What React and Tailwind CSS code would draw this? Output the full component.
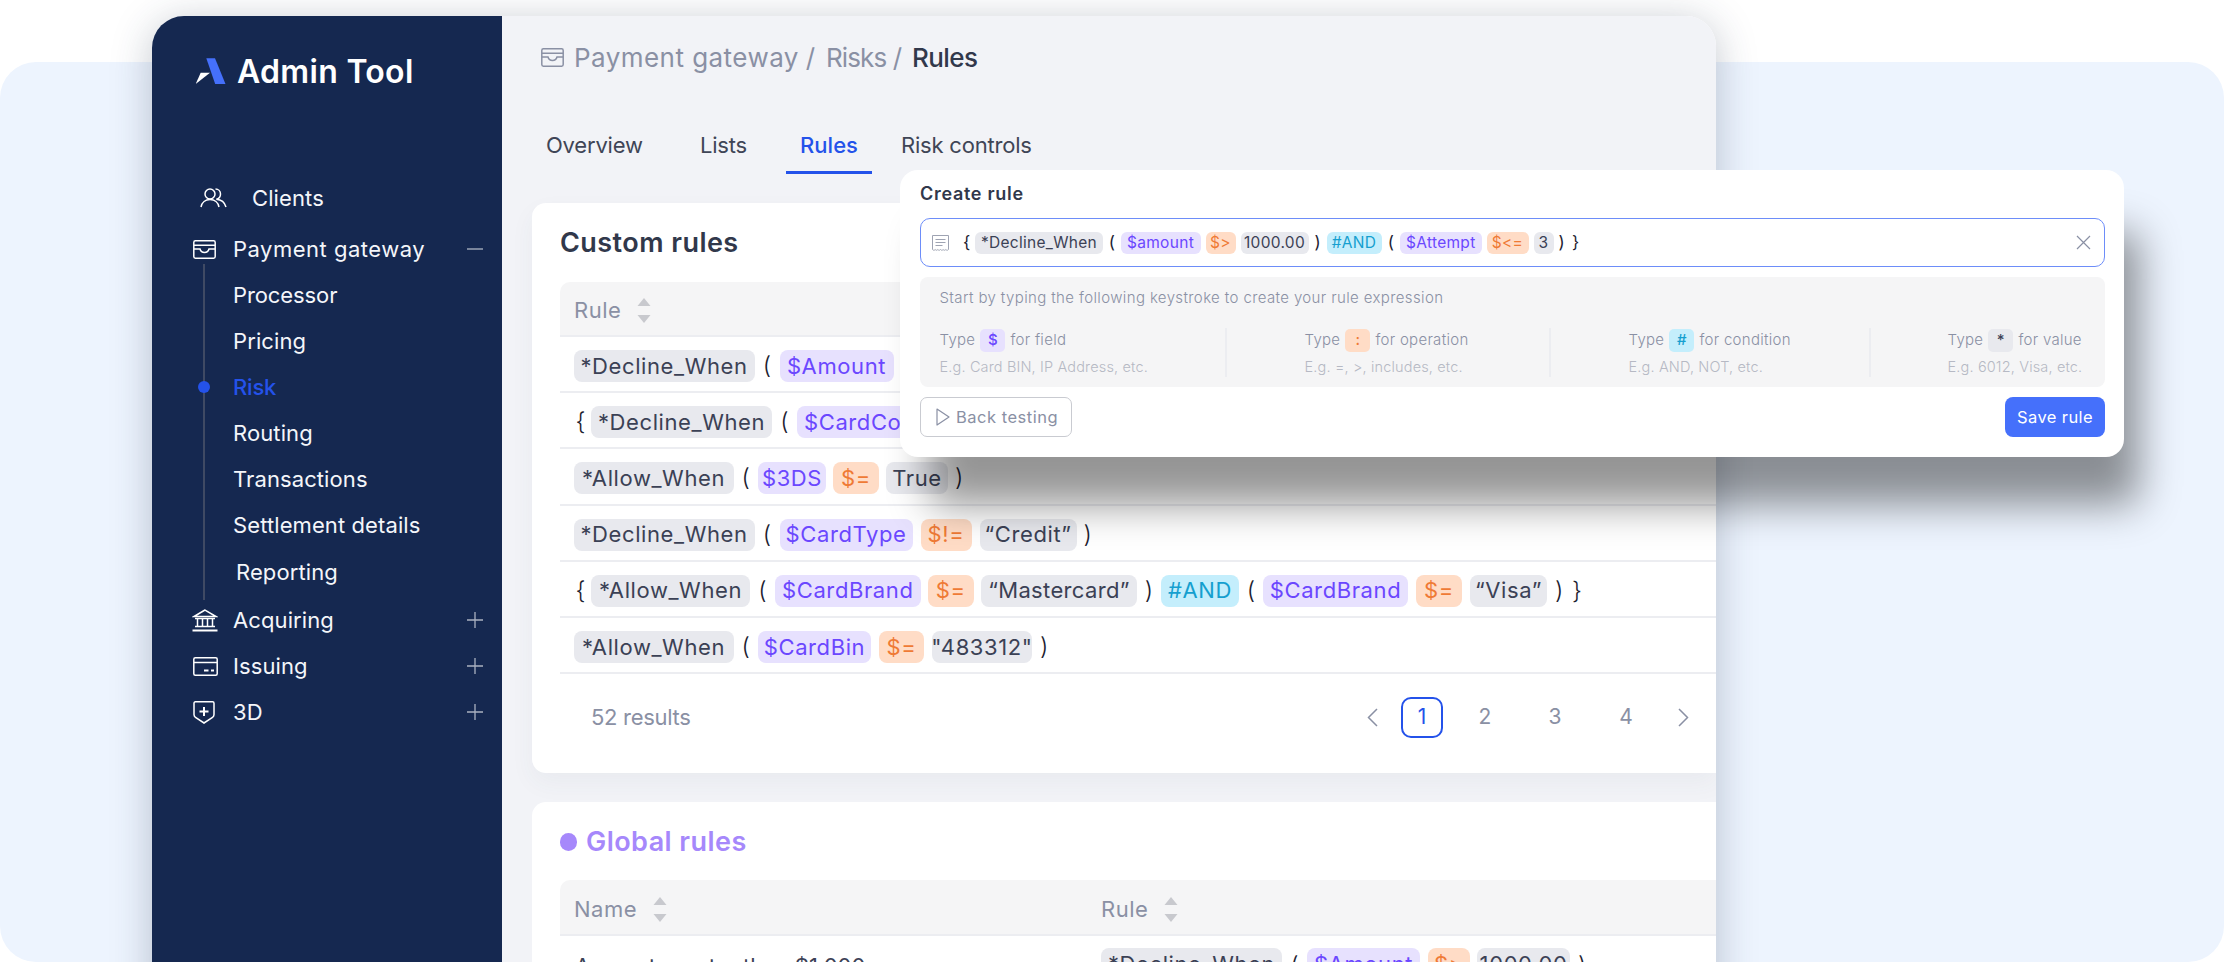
import React from "react";

function WalletIcon({ className }) {
  return (
    <svg viewBox="0 0 23 19" fill="none" stroke="currentColor" strokeWidth="1.5" className={className}>
      <rect x="0.8" y="0.8" width="21.4" height="17.4" rx="1.6" />
      <path d="M1 5.2h21" />
      <path d="M1 9h6c.6 2.2 2.4 3.4 4.5 3.4S15.400 11.200 16 9h6" />
    </svg>
  );
}

function Minus() {
  return <svg viewBox="0 0 16 16" className="w-4 h-4" stroke="#9aa3b5" strokeWidth="1.3"><path d="M0 8h16" /></svg>;
}
function Plus() {
  return <svg viewBox="0 0 16 16" className="w-4 h-4" stroke="#aab1c0" strokeWidth="1.3"><path d="M0 8h16M8 0v16" /></svg>;
}

function Sort() {
  return (
    <svg viewBox="0 0 14 25" className="w-[14px] h-[25px]" fill="#c8c9ce">
      <path d="M7 0l6.500 8H.5z" />
      <path d="M.5 17h13L7 25z" />
    </svg>
  );
}

function Chip({ k = "g", className = "", children }) {
  const tone =
    k === "p" ? "bg-[#E7E1FE] text-[#6B47FF]" :
    k === "o" ? "bg-[#FFDCC6] text-[#EF7A35]" :
    k === "c" ? "bg-[#C4EEFC] text-[#159FCF]" :
    "bg-[#E8E9EE] text-[#3b4155]";
  return <span className={"inline-flex items-center justify-center whitespace-nowrap shrink-0 h-[32px] rounded-[8px] text-[22px] tracking-[0.6px] " + tone + " " + className}>{children}</span>;
}

function Par({ className = "", children }) {
  return <span className={"shrink-0 text-center text-[24px] text-[#1c2130] font-light " + className}>{children}</span>;
}

function Mini({ k = "g", className = "", children }) {
  const tone =
    k === "p" ? "bg-[#E7E1FE] text-[#6B47FF]" :
    k === "o" ? "bg-[#FFDCC6] text-[#EF7A35]" :
    k === "c" ? "bg-[#C4EEFC] text-[#159FCF]" :
    "bg-[#E8E9EE] text-[#3b4155]";
  return <span className={"inline-flex items-center justify-center whitespace-nowrap shrink-0 h-[22px] rounded-[6px] text-[15.500px] tracking-[0.3px] " + tone + " " + className}>{children}</span>;
}

function MPar({ className = "", children }) {
  return <span className={"shrink-0 text-center text-[17px] text-[#1c2130] " + className}>{children}</span>;
}

function Row({ children }) {
  return (
    <div className="flex items-center h-[56.200px] pl-[13.500px] pt-[4px] border-b-2 border-[#ECEDF1]">
      {children}
    </div>
  );
}

function NavRow({ icon, label, right, iconClass = "w-[40px]", className = "" }) {
  return (
    <div className={"flex items-center h-[46px] pr-[19px] text-[22px] tracking-[0.1px] text-[#F4F6FA] " + className}>
      <span className={"shrink-0 flex items-center " + iconClass}>{icon}</span>
      <span className="flex-1">{label}</span>
      {right}
    </div>
  );
}

function HintCol({ className, chip, tone, chipInk, title, sample }) {
  return (
    <div className={"h-[49px] flex flex-col justify-between " + className}>
      <div className="flex items-center text-[15px] tracking-[0.3px] text-[#8a90a4] font-light h-[23px] pt-[1px]">
        <span>Type</span>
        <span className={"mx-[5px] w-[25px] h-[23px] rounded-[5px] flex items-center justify-center font-medium " + tone + " " + chipInk}>{chip}</span>
        <span>{title}</span>
      </div>
      <div className="text-[14.500px] tracking-[0.15px] text-[#b6b9c4] font-light leading-[18px] pb-[1px]">{sample}</div>
    </div>
  );
}

export default function App() {
  return (
    <div className="relative w-[2224px] h-[962px] overflow-hidden bg-white font-['Inter',sans-serif]">
      <div className="absolute left-0 right-0 top-[62px] bottom-0 bg-[#EDF4FE] rounded-[36px]" />

      <div className="absolute left-[152px] top-[16px] w-[1564px] h-[1000px] rounded-tl-[32px] rounded-tr-[30px] shadow-[0_6px_40px_rgba(40,55,80,0.28)]" />

      <div className="relative ml-[152px] mt-[16px] w-[1564px] h-[946px] flex overflow-hidden rounded-tl-[32px] rounded-tr-[30px]">
        <aside className="w-[350px] shrink-0 bg-[#152850] pl-[41px]">
          <div className="h-[112px] flex items-center">
            <svg viewBox="0 0 32 28" className="w-[32px] h-[28px] ml-[3px]">
              <path d="M10.300.3H19L29.500 26H19.200z" fill="#4570FB" />
              <path d="M4.700 14.700H14L-.3 26z" fill="#fff" />
            </svg>
            <span className="ml-[9px] text-[32px] font-semibold tracking-[0.3px] text-white leading-none">Admin Tool</span>
          </div>
          <div className="mt-[47px]">
            <NavRow
              iconClass="w-[59px] pl-[7px]"
              label="Clients"
              icon={
                <svg viewBox="0 0 28 20" fill="none" stroke="#fff" strokeWidth="1.500" className="w-[28px] h-[20px]">
                  <circle cx="10" cy="6" r="5" />
                  <path d="M1 19c.8-4.500 4.500-7.500 9-7.500s8.200 3 9 7.500" />
                  <path d="M15.500 1c2.900 0 5 2.200 5 5s-2 4.800-4.200 5.200c4.500.3 8.400 3 9.700 7.800" />
                </svg>
              }
            />
            <NavRow
              className="mt-[5px]"
              label={<span className="tracking-[0.5px]">Payment gateway</span>}
              icon={<WalletIcon className="w-[23px] h-[19px] text-white" />}
              right={<Minus />}
            />
            <div className="relative">
              <div className="absolute left-[10px] -top-[8px] -bottom-[5px] w-[2px] bg-[#3f4a64]" />
              <NavRow label={<span className="-tracking-[0.1px]">Processor</span>} />
              <NavRow label="Pricing" />
              <div className="relative">
                <span className="absolute left-[5px] top-[17px] w-3 h-3 rounded-full bg-[#2452EA]" />
                <NavRow label={<span className="text-[#2452EA] font-medium -tracking-[0.2px]">Risk</span>} />
              </div>
              <NavRow label="Routing" />
              <NavRow label="Transactions" />
              <NavRow label="Settlement details" />
              <NavRow className="mt-[1px]" iconClass="w-[43px]" label="Reporting" />
            </div>
            <NavRow
              className="mt-[2px]"
              label="Acquiring"
              right={<Plus />}
              icon={
                <svg viewBox="0 0 26 23" fill="none" stroke="#fff" strokeWidth="1.500" className="w-[26px] h-[23px] -ml-[1px]">
                  <path d="M13 1L2 7.500h22z" />
                  <path d="M3 9.500h20M3 17.500h20M5.500 9.500v8M10.500 9.500v8M15.500 9.500v8M20.500 9.500v8" />
                  <path d="M0.500 21.500h25" strokeWidth="2" />
                </svg>
              }
            />
            <NavRow
              label="Issuing"
              right={<Plus />}
              icon={
                <svg viewBox="0 0 25 19" fill="none" stroke="#fff" strokeWidth="1.500" className="w-[25px] h-[19px]">
                  <rect x="0.800" y="0.800" width="23.400" height="17.400" rx="1.500" />
                  <path d="M1 5.500h23" />
                  <path d="M11 13.500h4.500M18 13.500h3" strokeWidth="2" />
                </svg>
              }
            />
            <NavRow
              label="3D"
              right={<Plus />}
              icon={
                <svg viewBox="0 0 22 23" fill="none" stroke="#fff" strokeWidth="1.500" className="w-[22px] h-[23px]">
                  <path d="M1 2.200c0-.8.500-1.400 1.400-1.400h17.200c.9 0 1.400.6 1.400 1.400v11.300c0 1.200-.5 2.200-1.500 3L11 22 2.500 16.500c-1-.8-1.500-1.800-1.500-3z" />
                  <path d="M6.500 10.500h9M11 6v9" strokeWidth="2" />
                </svg>
              }
            />
          </div>
        </aside>

        <main className="flex-1 min-w-0 bg-[#F2F3F7] overflow-hidden">
          <div className="h-[84px] flex items-center pl-[39px] pb-[1px] text-[26px] text-[#8a90a4] whitespace-nowrap">
            <WalletIcon className="w-[23px] h-[19px] text-[#8a90a4]" />
            <span className="ml-[10px] w-[224px] tracking-[0.45px]">Payment gateway</span>
            <span className="ml-[10px] w-[5px] flex justify-center">/</span>
            <span className="ml-[13px] w-[59px] -tracking-[0.9px]">Risks</span>
            <span className="ml-[10px] w-[5px] flex justify-center">/</span>
            <span className="ml-[12px] font-medium -tracking-[0.6px] text-[#31384b]">Rules</span>
          </div>

          <div className="h-[74px] flex items-end pl-[30px] text-[22px] text-[#3f4556] -tracking-[0.2px]">
            <span className="h-[62px] ml-[14px] w-[96px] flex items-center pt-[4px] whitespace-nowrap">Overview</span>
            <span className="h-[62px] ml-[58px] w-[43px] flex items-center pt-[4px]">Lists</span>
            <span className="h-[62px] ml-[43px] w-[86px] flex items-center justify-center pt-[7px] tracking-[0px] text-[#2452EA] font-medium border-b-[3px] border-[#2452EA]">Rules</span>
            <span className="h-[62px] ml-[29px] flex items-center pt-[4px] whitespace-nowrap">Risk controls</span>
          </div>

          <section className="ml-[30px] mt-[29px] h-[570px] bg-white rounded-l-[14px] shadow-[0_10px_25px_rgba(60,70,100,0.05)] pl-[28px]">
            <h2 className="h-[79px] flex items-center pt-[2px] text-[27px] font-semibold text-[#31384b] tracking-[0.45px]">Custom rules</h2>
            <div className="h-[55px] flex items-center gap-[16px] pl-[14px] pt-[4px] bg-[#F5F5F6] rounded-tl-[10px] border-b-2 border-[#ECEDF1] text-[22px] text-[#8a90a4] tracking-[0.5px]">
              Rule <Sort />
            </div>

            <Row>
              <Chip className="w-[181px]">*Decline_When</Chip>
              <Par className="w-[25px]">(</Par>
              <Chip k="p" className="w-[114px]">$Amount</Chip>
            </Row>
            <Row>
              <Par className="w-[17.500px] text-left pl-[2px]">{"{"}</Par>
              <Chip className="w-[181px]">*Decline_When</Chip>
              <Par className="w-[25px]">(</Par>
              <Chip k="p" className="w-[180px] justify-start pl-[7px]">$CardCountry</Chip>
            </Row>
            <Row>
              <Chip className="w-[160px]">*Allow_When</Chip>
              <Par className="w-[24.500px]">(</Par>
              <Chip k="p" className="w-[68px]">$3DS</Chip>
              <Chip k="o" className="w-[46px] ml-[7px]">$=</Chip>
              <Chip className="w-[62px] ml-[7px]">True</Chip>
              <Par className="w-[8px] ml-[7px]">)</Par>
            </Row>
            <Row>
              <Chip className="w-[181px]">*Decline_When</Chip>
              <Par className="w-[25px]">(</Par>
              <Chip k="p" className="w-[133px]">$CardType</Chip>
              <Chip k="o" className="w-[51px] ml-[8px]">$!=</Chip>
              <Chip className="w-[97px] ml-[8px]">“Credit”</Chip>
              <Par className="w-[8px] ml-[7px]">)</Par>
            </Row>
            <Row>
              <Par className="w-[17.500px] text-left pl-[2px]">{"{"}</Par>
              <Chip className="w-[159px]">*Allow_When</Chip>
              <Par className="w-[25px]">(</Par>
              <Chip k="p" className="w-[145.500px]">$CardBrand</Chip>
              <Chip k="o" className="w-[45.500px] ml-[7.500px]">$=</Chip>
              <Chip className="w-[156px] ml-[7.500px] tracking-[0.35px]">“Mastercard”</Chip>
              <Par className="w-[24px]">)</Par>
              <Chip k="c" className="w-[78px]">#AND</Chip>
              <Par className="w-[24px]">(</Par>
              <Chip k="p" className="w-[145px]">$CardBrand</Chip>
              <Chip k="o" className="w-[46px] ml-[8px]">$=</Chip>
              <Chip className="w-[77px] ml-[8px]">“Visa”</Chip>
              <Par className="w-[8px] ml-[8px]">)</Par>
              <Par className="w-[8px] ml-[9px]">{"}"}</Par>
            </Row>
            <Row>
              <Chip className="w-[160px]">*Allow_When</Chip>
              <Par className="w-[24.500px]">(</Par>
              <Chip k="p" className="w-[113px]">$CardBin</Chip>
              <Chip k="o" className="w-[45px] ml-[8px]">$=</Chip>
              <Chip className="w-[100px] ml-[8px]">"483312"</Chip>
              <Par className="w-[8px] ml-[8px]">)</Par>
            </Row>

            <div className="h-[86px] flex items-center pl-[31px] text-[22px] text-[#8a90a4]">
              <span className="-tracking-[0.3px]">52 results</span>
              <div className="ml-auto flex items-center pr-[27px] text-[21px]">
                <svg viewBox="0 0 11 19" fill="none" stroke="#8a90a4" strokeWidth="1.500" className="w-[11px] h-[19px]"><path d="M10 1L1.500 9.500 10 18" /></svg>
                <span className="ml-[23px] w-[42px] h-[41px] rounded-[10px] border-2 border-[#2452EA] text-[#2452EA] flex items-center justify-center">1</span>
                <span className="ml-[21px] w-[42px] text-center">2</span>
                <span className="ml-[28px] w-[42px] text-center">3</span>
                <span className="ml-[29px] w-[42px] text-center">4</span>
                <svg viewBox="0 0 11 19" fill="none" stroke="#8a90a4" strokeWidth="1.500" className="ml-[31px] w-[11px] h-[19px]"><path d="M1 1l8.500 8.500L1 18" /></svg>
              </div>
            </div>
          </section>

          <section className="ml-[30px] mt-[29px] h-[200px] bg-white rounded-l-[14px] pl-[28px]">
            <h2 className="h-[78px] flex items-center pt-[2px] text-[27px] font-semibold text-[#A688FB] tracking-[0.45px]">
              <span className="w-[17.500px] h-[17.500px] rounded-full bg-[#A688FB] mr-[9px] -ml-[.5px]" />
              Global rules
            </h2>
            <div className="h-[56px] flex items-center pt-[4px] bg-[#F5F5F6] rounded-tl-[10px] border-b-2 border-[#ECEDF1] text-[22px] text-[#8a90a4] tracking-[0.5px]">
              <div className="w-[541px] pl-[14px] flex items-center gap-[16px]">Name <Sort /></div>
              <div className="flex items-center gap-[16px]">Rule <Sort /></div>
            </div>
            <div className="flex items-start pt-[12px]">
              <div className="w-[541px] pl-[15px] pt-[2px] text-[22px] text-[#3b4155] whitespace-nowrap">Amount greater than $1,000</div>
              <Chip className="w-[181px]">*Decline_When</Chip>
              <Par className="w-[25px]">(</Par>
              <Chip k="p" className="w-[113px]">$Amount</Chip>
              <Chip k="o" className="w-[42px] ml-[8px]">$&gt;</Chip>
              <Chip className="w-[93px] ml-[7px]">1000.00</Chip>
              <Par className="w-[8px] ml-[8px]">)</Par>
            </div>
          </section>
        </main>
      </div>

      <div className="absolute left-[900px] top-[170px] w-[1224px] h-[287px] bg-white rounded-[18px] pl-[20px] pr-[19px] shadow-[22px_55px_40px_-7px_rgba(0,0,0,0.42)]">
        <div className="h-[48px] flex items-center pb-[2px] text-[18px] font-semibold text-[#31384b] tracking-[0.7px]">Create rule</div>
        <div className="h-[49px] flex items-center pl-[11px] pr-[13px] rounded-[10px] border-[1.500px] border-[#6d8df9]">
          <svg viewBox="0 0 17 16" fill="none" stroke="#9ea3b2" strokeWidth="1" className="w-[17px] h-[16px] shrink-0">
            <path d="M.5 14.500V.5h16v14c-1 1-1.600 1-2.700 0-1 1-1.600 1-2.700 0-1 1-1.600 1-2.600 0-1 1-1.600 1-2.700 0-1 1-1.600 1-2.600 0-1 1-1.600 1-2.700 0z" />
            <path d="M3.500 4.500h10M3.500 7.500h10M3.500 10.500h7" />
          </svg>
          <MPar className="w-[9px] ml-[13px]">{"{"}</MPar>
          <Mini className="w-[128px] ml-[4px]">*Decline_When</Mini>
          <MPar className="w-[17.500px]">(</MPar>
          <Mini k="p" className="w-[80px]">$amount</Mini>
          <Mini k="o" className="w-[30px] ml-[5px]">$&gt;</Mini>
          <Mini className="w-[68px] ml-[5px]">1000.00</Mini>
          <MPar className="w-[18px]">)</MPar>
          <Mini k="c" className="w-[55px]">#AND</Mini>
          <MPar className="w-[18.500px]">(</MPar>
          <Mini k="p" className="w-[81.500px]">$Attempt</Mini>
          <Mini k="o" className="w-[42px] ml-[5px]">$&lt;=</Mini>
          <Mini className="w-[20px] ml-[5px]">3</Mini>
          <MPar className="w-[8px] ml-[4px]">)</MPar>
          <MPar className="w-[8px] ml-[6px]">{"}"}</MPar>
          <svg viewBox="0 0 15 15" fill="none" stroke="#8a90a4" strokeWidth="1.200" className="ml-auto w-[15px] h-[15px] shrink-0"><path d="M1 1l13 13M14 1L1 14" /></svg>
        </div>
        <div className="mt-[10px] h-[110px] bg-[#F5F5F6] rounded-[8px] pl-[19.500px]">
          <div className="h-[51px] pt-[12px] text-[15px] tracking-[0.38px] text-[#8a90a4] font-light leading-[18px]">Start by typing the following keystroke to create your rule expression</div>
          <div className="flex">
            <HintCol className="w-[287px] border-r-2 border-[#ECEDF1]" chip="$" tone="bg-[#E7E1FE]" chipInk="text-[#6B47FF]" title="for field" sample="E.g. Card BIN, IP Address, etc." />
            <HintCol className="w-[324px] pl-[78px] border-r-2 border-[#ECEDF1]" chip=":" tone="bg-[#FFDCC6]" chipInk="text-[#EF7A35]" title="for operation" sample="E.g. =, >, includes, etc." />
            <HintCol className="w-[320px] pl-[78px] border-r-2 border-[#ECEDF1]" chip="#" tone="bg-[#C4EEFC]" chipInk="text-[#159FCF]" title="for condition" sample="E.g. AND, NOT, etc." />
            <HintCol className="pl-[77px]" chip="*" tone="bg-[#E8E9EE]" chipInk="text-[#3b4155]" title="for value" sample="E.g. 6012, Visa, etc." />
          </div>
        </div>
        <div className="mt-[10px] h-[40px] flex items-center justify-between">
          <button className="h-[40px] w-[152px] flex items-center pl-[15px] rounded-[7px] border-[1.500px] border-[#c9cbd1] text-[#8a90a4] text-[16.500px] tracking-[0.5px]">
            <svg viewBox="0 0 14 18" fill="none" stroke="#8a90a4" strokeWidth="1.200" className="w-[14px] h-[18px]"><path d="M1 1l12 8-12 8z" strokeLinejoin="round" /></svg>
            <span className="ml-[6px]">Back testing</span>
          </button>
          <button className="h-[40px] w-[100px] rounded-[8px] bg-[#4570FB] text-white text-[16.500px] tracking-[0.4px]">Save rule</button>
        </div>
      </div>
    </div>
  );
}
